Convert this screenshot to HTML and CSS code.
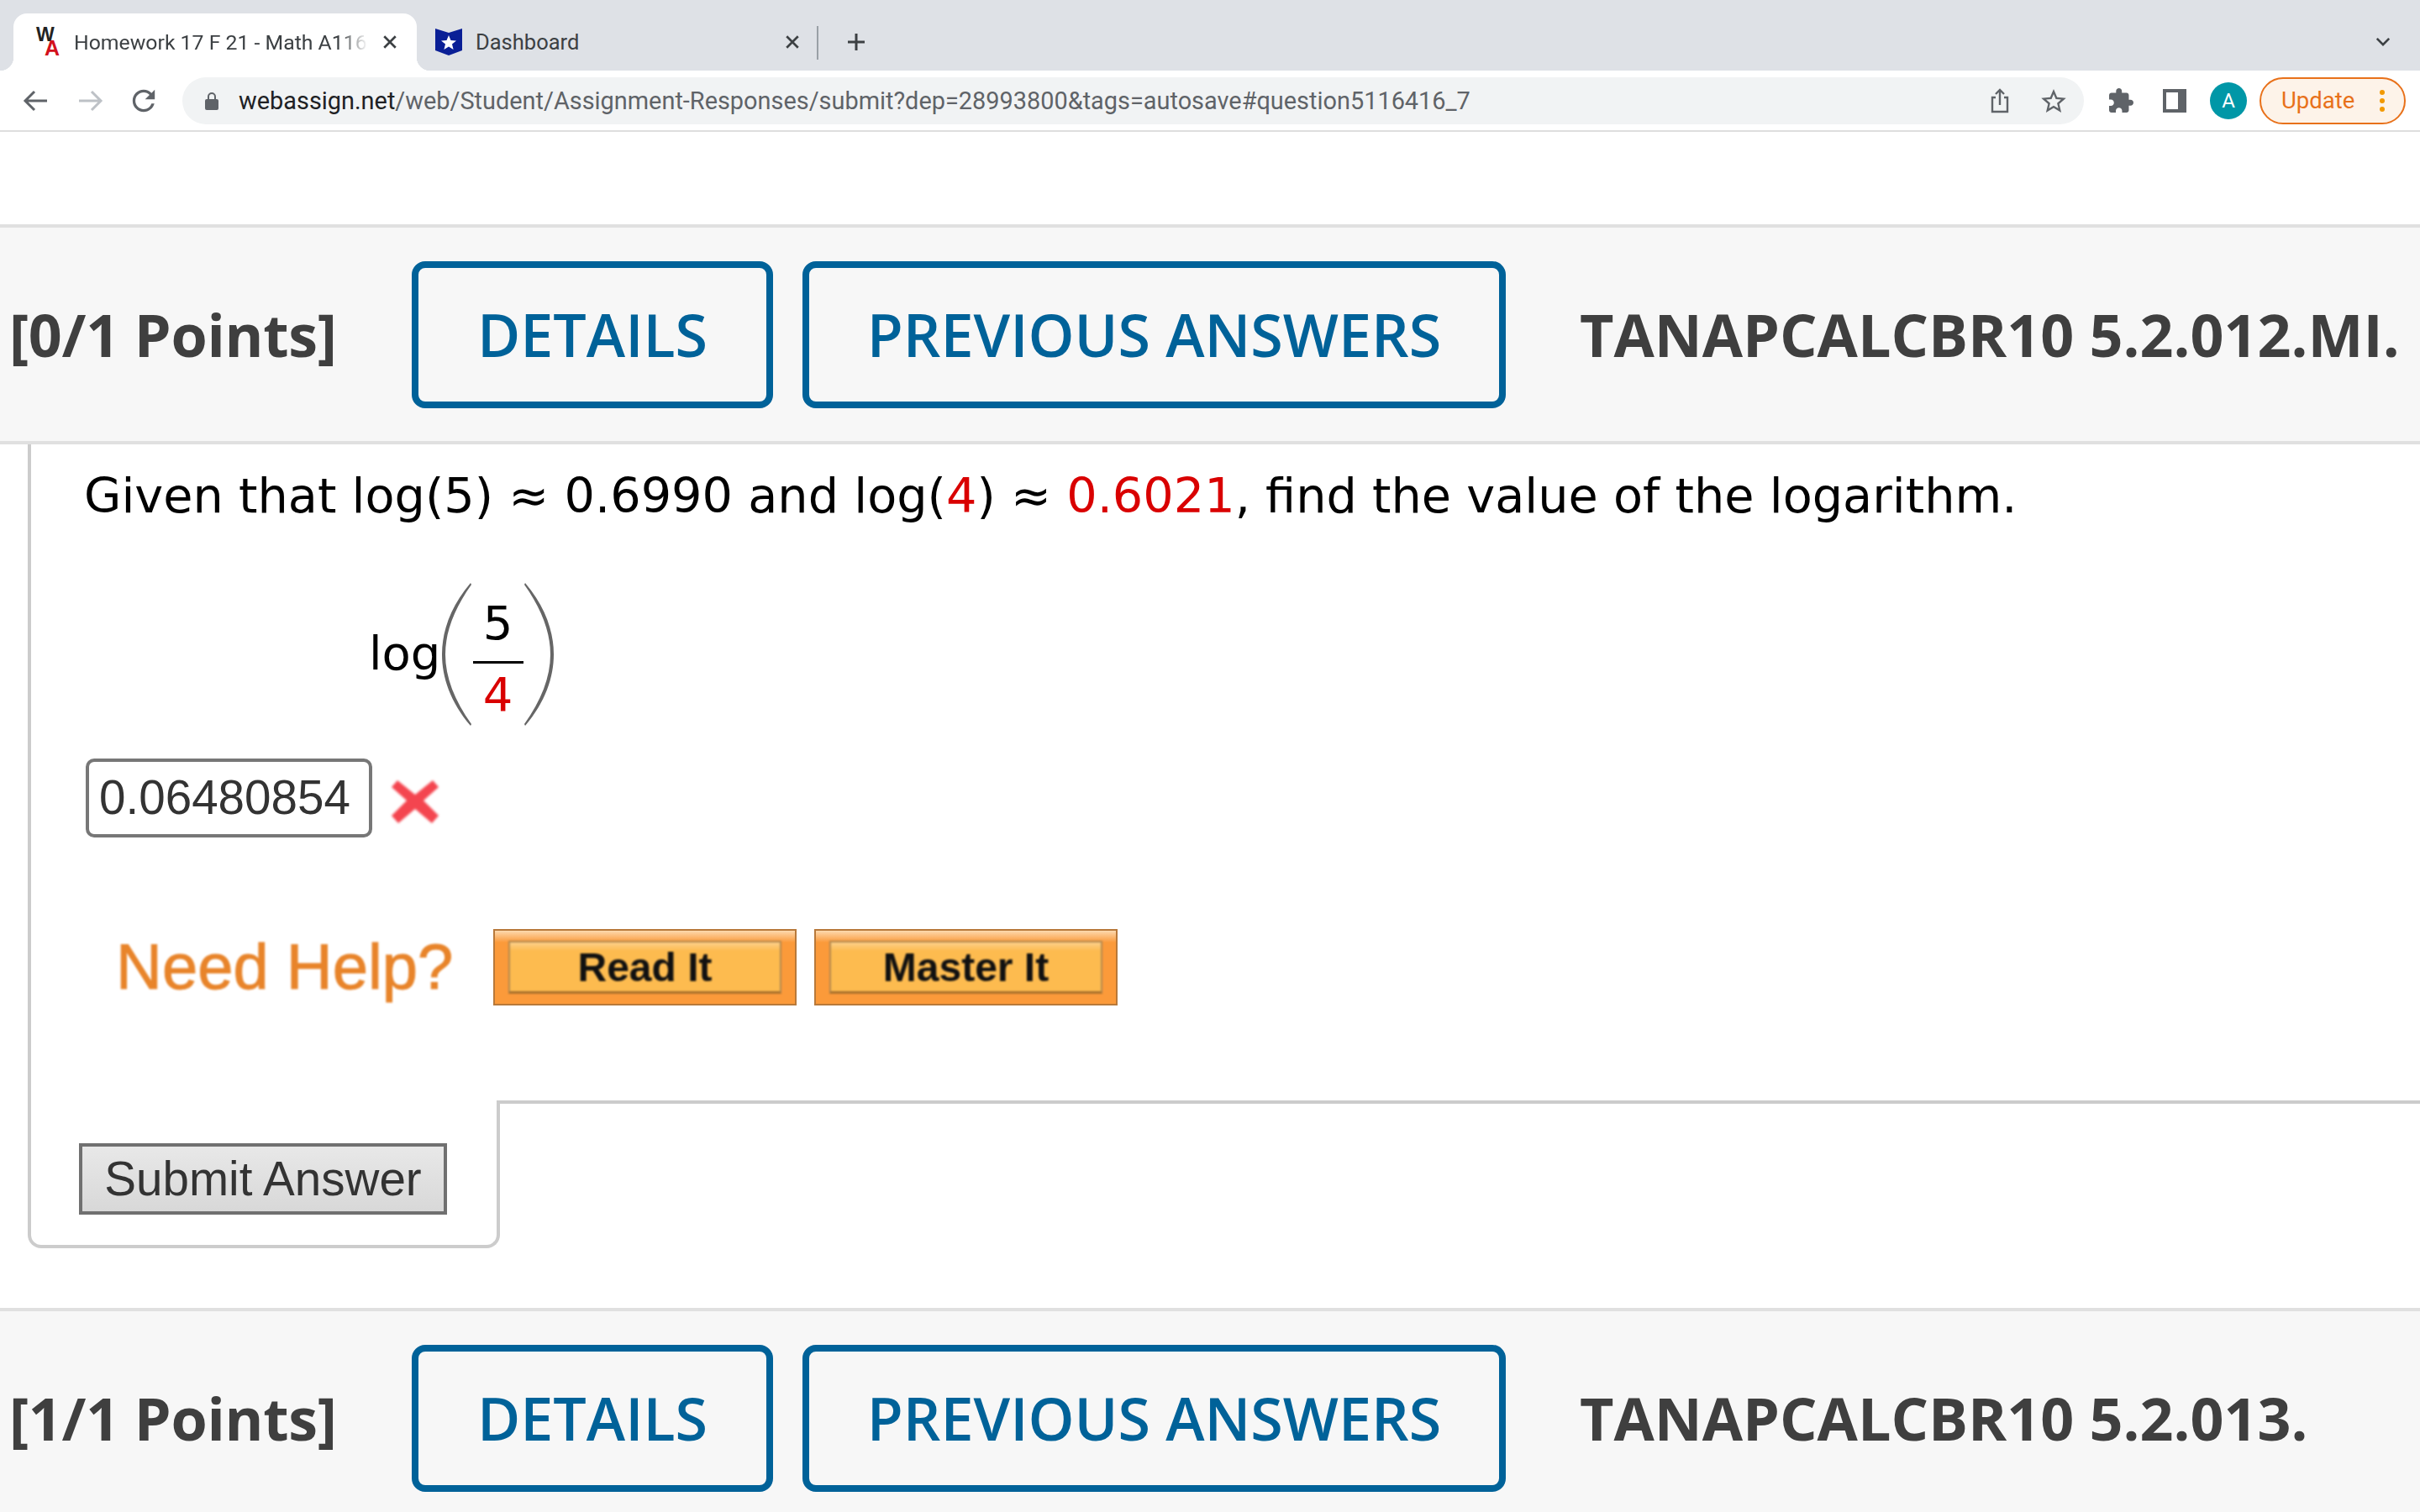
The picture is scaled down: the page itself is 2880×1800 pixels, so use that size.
FILE: index.html

```html
<!DOCTYPE html>
<html>
<head>
  <meta charset="UTF-8">
  <title>Homework 17 F 21 - Math A116</title>
  <link rel="stylesheet" href="styles.css">
</head>
<body>
  <div class="tabstrip">
    <div class="tab active">
      <span class="fav-wa"><span class="fav-w">W</span><span class="fav-a">A</span></span>
      <span class="tab-title">Homework 17 F 21 - Math A116</span>
      <svg class="tab-close" viewBox="0 0 16 16"><path d="M2 2l12 12M14 2L2 14"/></svg>
    </div>
    <div class="tab second">
      <svg class="fav-shield" viewBox="0 0 32 32">
        <path d="M0 0l16 5 16-5v26l-16 6-16-6z" fill="#0a1f96"/>
        <path d="M16 8l2.500 6 6.500.4-5 4.200 1.600 6.400-5.600-3.400-5.600 3.400 1.600-6.400-5-4.200 6.500-.4z" fill="#fff"/>
      </svg>
      <span class="tab-title plain">Dashboard</span>
      <svg class="tab-close" viewBox="0 0 16 16"><path d="M2 2l12 12M14 2L2 14"/></svg>
    </div>
    <div class="tab-sep"></div>
    <svg class="new-tab" viewBox="0 0 24 24"><path d="M12 2v20M2 12h20"/></svg>
    <svg class="tab-list" viewBox="0 0 20 12"><path d="M2 2l8 8 8-8"/></svg>
  </div>

  <div class="toolbar">
    <svg class="nav-btn" viewBox="0 0 64 32"><path d="M45 16H20M30 5L19 16l11 11"/></svg>
    <svg class="nav-btn off" viewBox="0 0 64 32"><path d="M19 16h25M34 5l11 11-11 11"/></svg>
    <svg class="nav-btn fill" viewBox="-7.400 2.300 38.800 19.400"><path d="M17.650 6.350A7.958 7.958 0 0 0 12 4c-4.420 0-7.990 3.580-7.990 8s3.570 8 7.990 8c3.730 0 6.840-2.550 7.730-6h-2.080A5.990 5.990 0 0 1 12 18c-3.310 0-6-2.690-6-6s2.690-6 6-6c1.660 0 3.140.69 4.220 1.780L13 11h7V4l-2.350 2.350z"/></svg>
    <div class="omnibox">
      <svg class="lock" viewBox="0 0 16 22">
        <path d="M4 10V6a4 4 0 0 1 8 0v4" fill="none" stroke="#5f6368" stroke-width="2"/>
        <rect x="0" y="9" width="16" height="13" rx="2" fill="#5f6368"/>
      </svg>
      <div class="url"><span class="host">webassign.net</span>/web/Student/Assignment-Responses/submit?dep=28993800&amp;tags=autosave#question5116416_7</div>
      <svg class="share" viewBox="0 0 22 30">
        <path d="M6 11H2v17h18V11h-4M11 20V2M6 7l5-5 5 5"/>
      </svg>
      <svg class="star" viewBox="2 2 20 19"><path d="M22 9.240l-7.190-.62L12 2 9.190 8.630 2 9.240l5.460 4.730L5.820 21 12 17.270 18.180 21l-1.630-7.030L22 9.240zM12 15.400l-3.760 2.270 1-4.280-3.320-2.880 4.380-.38L12 6.100l1.710 4.040 4.380.38-3.320 2.880 1 4.280L12 15.400z"/></svg>
    </div>
    <svg class="puzzle" viewBox="2 1 21 21"><path d="M20.500 11H19V7c0-1.100-.9-2-2-2h-4V3.500C13 2.120 11.880 1 10.500 1S8 2.120 8 3.500V5H4c-1.100 0-1.990.9-1.990 2v3.800H3.500c1.490 0 2.700 1.210 2.700 2.700s-1.210 2.700-2.700 2.700H2V20c0 1.100.9 2 2 2h3.800v-1.500c0-1.490 1.210-2.700 2.700-2.700 1.490 0 2.700 1.210 2.700 2.700V22H17c1.100 0 2-.9 2-2v-4h1.500c1.380 0 2.500-1.120 2.500-2.500S21.880 11 20.500 11z"/></svg>
    <div class="side-panel"><div class="side-panel-in"></div></div>
    <div class="avatar">A</div>
    <div class="update">
      <span>Update</span>
      <span class="dots"><i></i><i></i><i></i></span>
    </div>
  </div>

  <div class="q-head first">
    <div class="points">[0/1 Points]</div>
    <div class="head-btn details">DETAILS</div>
    <div class="head-btn prev">PREVIOUS ANSWERS</div>
    <div class="q-code">TANAPCALCBR10 5.2.012.MI.</div>
  </div>

  <div class="q-main">
    <p class="statement">Given that log(5) ≈ 0.6990 and log(<span class="red">4</span>) ≈ <span class="red">0.6021</span>, find the value of the logarithm.</p>

    <div class="formula">
      <span class="log">log</span>
      <svg class="paren" viewBox="0 0 36 170"><path d="M34 0C10 28 0 58 0 85c0 27 10 57 34 85l1-2C15 140 4 112 4 85 4 58 15 30 35 2z"/></svg>
      <div class="frac">
        <span>5</span>
        <div class="frac-bar"></div>
        <span class="red">4</span>
      </div>
      <svg class="paren" viewBox="0 0 36 170"><path d="M2 0c24 28 34 58 34 85 0 27-10 57-34 85l-1-2c20-28 31-56 31-83C32 58 21 30 1 2z"/></svg>
    </div>

    <div class="answer-row">
      <div class="answer">0.06480854</div>
      <svg class="wrong" viewBox="0 0 58 60"><path d="M8 6l21 17L50 6l7 8-18 16 18 18-8 9-20-17L9 57l-8-9 18-18L1 14z"/></svg>
    </div>

    <div class="help-row">
      <div class="need-help">Need Help?</div>
      <div class="help-btn"><div class="help-btn-in">Read It</div></div>
      <div class="help-btn"><div class="help-btn-in">Master It</div></div>
    </div>
  </div>

  <div class="q-foot">
    <div class="submit-tab"><div class="submit">Submit Answer</div></div>
    <div class="foot-rule"></div>
  </div>

  <div class="q-head">
    <div class="points">[1/1 Points]</div>
    <div class="head-btn details">DETAILS</div>
    <div class="head-btn prev">PREVIOUS ANSWERS</div>
    <div class="q-code">TANAPCALCBR10 5.2.013.</div>
  </div>
</body>
</html>
```

FILE: styles.css

```css
html, body {
  margin: 0;
  padding: 0;
  height: 1800px;
  overflow: hidden;
  background: #fff;
}
body {
  font-family: "Liberation Sans", Arial, sans-serif;
}
.red {
  color: #d90000;
}

/* browser chrome */
.tabstrip {
  display: flex;
  align-items: flex-end;
  height: 84px;
  padding-left: 16px;
  background: #dee1e6;
  font-family: Roboto, sans-serif;
  font-size: 24.800px;
  color: #3c4043;
}
.tab {
  display: flex;
  align-items: center;
  height: 68px;
  box-sizing: border-box;
  position: relative;
  flex: none;
}
.tab.active {
  width: 480px;
  padding-left: 27px;
  background: #fff;
  border-radius: 16px 16px 0 0;
}
.tab.active::before, .tab.active::after {
  content: "";
  position: absolute;
  bottom: 0;
  width: 16px;
  height: 16px;
}
.tab.active::before {
  left: -16px;
  background: radial-gradient(circle at 0 0, #dee1e6 16px, #fff 16.5px);
}
.tab.active::after {
  right: -16px;
  background: radial-gradient(circle at 100% 0, #dee1e6 16px, #fff 16.5px);
}
.tab.second {
  width: 460px;
  padding-left: 22px;
}
.fav-wa {
  position: relative;
  display: block;
  width: 28px;
  height: 34px;
  font-family: "Liberation Sans", sans-serif;
  font-weight: bold;
}
.fav-w {
  position: absolute;
  left: 0;
  top: -1px;
  font-size: 23px;
  line-height: 18px;
  color: #222;
  letter-spacing: -1px;
}
.fav-a {
  position: absolute;
  right: 0;
  bottom: 1px;
  font-size: 25px;
  line-height: 18px;
  color: #d3101c;
}
.fav-shield {
  width: 32px;
  height: 32px;
  flex: none;
}
.tab-title {
  width: 350px;
  margin-left: 17px;
  white-space: nowrap;
  overflow: hidden;
  -webkit-mask-image: linear-gradient(to right, #000 90%, transparent);
  mask-image: linear-gradient(to right, #000 90%, transparent);
}
.tab-title.plain {
  width: 351px;
  margin-left: 16px;
  font-size: 25.500px;
  -webkit-mask-image: none;
  mask-image: none;
}
.tab-close {
  width: 18px;
  height: 18px;
  margin-left: 17px;
  flex: none;
  fill: none;
  stroke: #3c4043;
  stroke-width: 2.400;
}
.tab-sep {
  width: 2px;
  height: 40px;
  margin-bottom: 13px;
  margin-left: 16px;
  background: #9aa0a6;
}
.new-tab {
  width: 24px;
  height: 24px;
  margin: 0 0 22px 33px;
  fill: none;
  stroke: #3c4043;
  stroke-width: 3;
}
.tab-list {
  width: 18px;
  height: 11px;
  margin: 0 35px 29px auto;
  fill: none;
  stroke: #3c4043;
  stroke-width: 3;
}

.toolbar {
  display: flex;
  align-items: center;
  height: 71px;
  padding: 0 17px 0 11px;
  border-bottom: 2px solid #dedede;
  background: #fff;
}
.nav-btn {
  width: 64px;
  height: 32px;
  flex: none;
  fill: none;
  stroke: #5f6368;
  stroke-width: 3;
}
.nav-btn.off {
  stroke: #bdc1c6;
}
.nav-btn.fill {
  fill: #5f6368;
  stroke: none;
}
.omnibox {
  display: flex;
  align-items: center;
  flex: 1;
  height: 56px;
  margin-left: 14px;
  padding: 0 21px 0 27px;
  border-radius: 28px;
  background: #f1f3f4;
}
.lock {
  width: 16px;
  height: 22px;
  flex: none;
}
.url {
  flex: 1;
  margin-left: 24px;
  font-family: Roboto, sans-serif;
  font-size: 28.900px;
  white-space: nowrap;
  color: #5f6368;
}
.host {
  color: #202124;
}
.share {
  width: 22px;
  height: 30px;
  fill: none;
  stroke: #5f6368;
  stroke-width: 2.400;
}
.star {
  width: 30px;
  height: 28px;
  margin-left: 38px;
  fill: #5f6368;
}
.puzzle {
  width: 29px;
  height: 29px;
  margin-left: 30px;
  fill: #5f6368;
}
.side-panel {
  width: 28px;
  height: 28px;
  margin-left: 35px;
  padding: 4px 10px 4px 4px;
  box-sizing: border-box;
  background: #5f6368;
}
.side-panel-in {
  height: 100%;
  background: #fff;
}
.avatar {
  width: 44px;
  height: 44px;
  margin-left: 28px;
  border-radius: 50%;
  background: #0097a7;
  color: #fff;
  font-family: Roboto, sans-serif;
  font-size: 24px;
  line-height: 44px;
  text-align: center;
}
.update {
  display: flex;
  align-items: center;
  width: 174px;
  height: 56px;
  margin-left: 15px;
  padding-left: 24px;
  box-sizing: border-box;
  border: 2px solid #e8711a;
  border-radius: 28px;
  background: #fdf3e9;
  color: #e8711a;
  font-family: Roboto, sans-serif;
  font-size: 27.500px;
}
.dots {
  display: flex;
  flex-direction: column;
  gap: 4px;
  margin-left: 30px;
}
.dots i {
  display: block;
  width: 6px;
  height: 6px;
  border-radius: 50%;
  background: #f29900;
}

/* question header */
.q-head {
  display: flex;
  align-items: center;
  box-sizing: border-box;
  height: 262px;
  padding-left: 11px;
  border-top: 4px solid #e0e0e0;
  border-bottom: 4px solid #e0e0e0;
  background: #f7f7f7;
  font-family: "Open Sans", sans-serif;
  font-size: 70px;
  color: #3f3f3f;
}
.q-head.first {
  margin-top: 110px;
}
.points {
  width: 479px;
  flex: none;
  font-weight: 700;
  letter-spacing: -.3px;
  white-space: nowrap;
}
.head-btn {
  display: flex;
  align-items: center;
  justify-content: center;
  height: 175px;
  box-sizing: border-box;
  flex: none;
  border: 8px solid #006299;
  border-radius: 16px;
  color: #006299;
  font-weight: 600;
  white-space: nowrap;
}
.details {
  width: 430px;
}
.prev {
  width: 837px;
  margin-left: 35px;
}
.q-code {
  margin-left: 88px;
  font-weight: 700;
  white-space: nowrap;
}

/* question body */
.q-main {
  height: 781px;
  box-sizing: border-box;
  margin-left: 33px;
  padding-left: 65px;
  border-left: 4px solid #ccc;
  font-family: "DejaVu Sans", sans-serif;
  color: #000;
}
.statement {
  margin: 0 0 0 -2px;
  padding-top: 27px;
  font-size: 57.300px;
  line-height: 70px;
  white-space: nowrap;
}
.formula {
  display: flex;
  align-items: center;
  height: 170px;
  margin: 68px 0 0 337px;
  font-size: 56px;
}
.log {
  width: 87px;
  margin-bottom: 4px;
}
.paren {
  width: 36px;
  height: 170px;
  fill: #666;
}
.frac {
  display: flex;
  flex-direction: column;
  align-items: center;
  box-sizing: border-box;
  width: 61px;
  padding-top: 11px;
  font-size: 56px;
  line-height: 60px;
}
.frac-bar {
  width: 60px;
  height: 3px;
  margin: 15px 0 7px;
  background: #000;
}
.answer-row {
  display: flex;
  align-items: center;
  margin-top: 39px;
}
.answer {
  width: 341px;
  height: 94px;
  box-sizing: border-box;
  padding-left: 12px;
  border: 4px solid #777;
  border-radius: 10px;
  font-family: "Liberation Sans", sans-serif;
  font-size: 56.600px;
  line-height: 86px;
  color: #333;
}
.wrong {
  width: 58px;
  height: 60px;
  margin: 5px 0 0 22px;
  fill: #f4454f;
  filter: blur(1.5px);
}
.help-row {
  display: flex;
  margin: 109px 0 0 36px;
  font-family: "Liberation Sans", sans-serif;
}
.need-help {
  width: 449px;
  padding-top: 2px;
  font-size: 76px;
  line-height: 86px;
  color: #e8842a;
  white-space: nowrap;
  -webkit-text-stroke: 1px #e8842a;
  filter: blur(1.200px);
}
.help-btn {
  width: 361px;
  height: 91px;
  box-sizing: border-box;
  margin-right: 21px;
  padding: 12px 16px;
  border: 2px solid #b8793a;
  background: linear-gradient(#fdd9ae 0, #fb9a3a 14px, #fb9a3a 100%);
}
.help-btn-in {
  height: 63px;
  box-sizing: border-box;
  border: 2px solid #b58a50;
  border-bottom: 3px solid #a8702c;
  background: linear-gradient(#fdd08a 0, #fdbb4f 10px);
  color: #111;
  font-size: 48px;
  font-weight: bold;
  line-height: 60px;
  text-align: center;
  filter: blur(1px);
}

/* submit tab */
.q-foot {
  display: flex;
  margin-left: 33px;
}
.submit-tab {
  width: 562px;
  height: 176px;
  box-sizing: border-box;
  padding: 51px 0 0 57px;
  border: 4px solid #ccc;
  border-top: none;
  border-radius: 0 0 16px 16px;
}
.submit {
  width: 438px;
  height: 85px;
  box-sizing: border-box;
  border: 4px solid #707070;
  background: linear-gradient(#e8e8e8, #d8d8d8);
  color: #333;
  font-size: 56.600px;
  line-height: 77px;
  text-align: center;
  white-space: nowrap;
}
.foot-rule {
  flex: 1;
  height: 4px;
  background: #ccc;
}
.q-foot + .q-head {
  margin-top: 71px;
}
```
